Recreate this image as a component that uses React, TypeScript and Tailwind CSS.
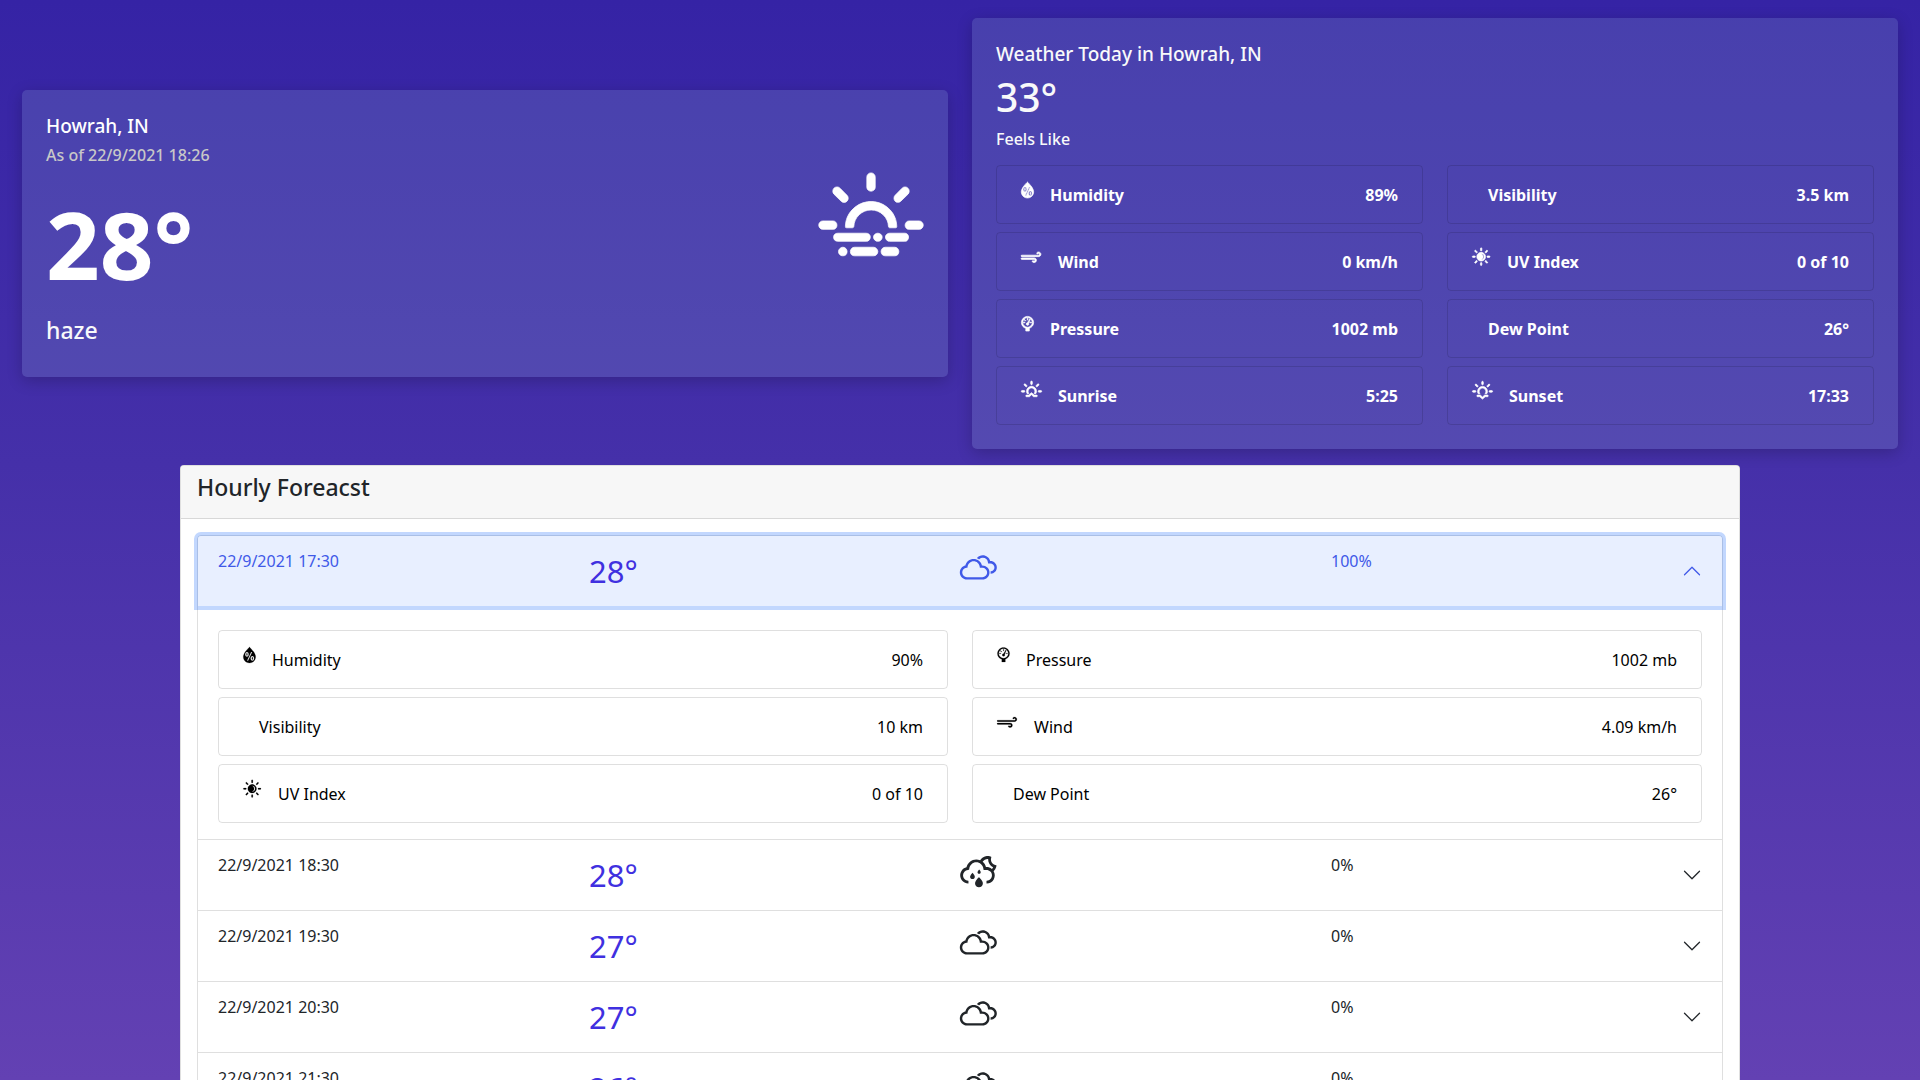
import { useState } from "react";
import type { IconType } from "react-icons";
import {
  WiBarometer,
  WiCloudy,
  WiDayHaze,
  WiHumidity,
  WiNightAltSprinkle,
  WiSolarEclipse,
  WiStrongWind,
  WiSunrise,
  WiSunset,
} from "react-icons/wi";

type Glyph = { icon: IconType; box: string; size: string };
type Reading = { label: string; value: string; glyph?: Glyph };
type Hour = { time: string; temp: string; icon: IconType; rain: string };

const humidity: Glyph = { icon: WiHumidity, box: "7.2 3 15.6 24", size: "w-[13px]" };
const wind: Glyph = { icon: WiStrongWind, box: "3 3 25.2 24", size: "w-[21px]" };
const pressure: Glyph = { icon: WiBarometer, box: "7.2 3 15.6 24", size: "w-[13px]" };
const sunrise: Glyph = { icon: WiSunrise, box: "2.4 3 25.2 24", size: "w-[21px]" };
const sunset: Glyph = { icon: WiSunset, box: "2.4 3 25.2 24", size: "w-[21px]" };
const uv: Glyph = { icon: WiSolarEclipse, box: "4 3 22.8 24", size: "w-[19px]" };

const today: Reading[] = [
  { label: "Humidity", value: "89%", glyph: humidity },
  { label: "Visibility", value: "3.5 km" },
  { label: "Wind", value: "0 km/h", glyph: wind },
  { label: "UV Index", value: "0 of 10", glyph: uv },
  { label: "Pressure", value: "1002 mb", glyph: pressure },
  { label: "Dew Point", value: "26°" },
  { label: "Sunrise", value: "5:25", glyph: sunrise },
  { label: "Sunset", value: "17:33", glyph: sunset },
];

const details: Reading[] = [
  { label: "Humidity", value: "90%", glyph: humidity },
  { label: "Pressure", value: "1002 mb", glyph: pressure },
  { label: "Visibility", value: "10 km" },
  { label: "Wind", value: "4.09 km/h", glyph: wind },
  { label: "UV Index", value: "0 of 10", glyph: uv },
  { label: "Dew Point", value: "26°" },
];

const hours: Hour[] = [
  { time: "22/9/2021 17:30", temp: "28°", icon: WiCloudy, rain: "100%" },
  { time: "22/9/2021 18:30", temp: "28°", icon: WiNightAltSprinkle, rain: "0%" },
  { time: "22/9/2021 19:30", temp: "27°", icon: WiCloudy, rain: "0%" },
  { time: "22/9/2021 20:30", temp: "27°", icon: WiCloudy, rain: "0%" },
  { time: "22/9/2021 21:30", temp: "26°", icon: WiCloudy, rain: "0%" },
];

function ReadingIcon({ glyph, bold }: { glyph: Glyph; bold?: boolean }) {
  const Icon = glyph.icon;
  return (
    <Icon
      aria-hidden
      viewBox={glyph.box}
      strokeWidth={bold ? 0.8 : 0.2}
      className={`h-5 shrink-0 overflow-visible ${glyph.size}`}
    />
  );
}

function ReadingBox({ reading, bold }: { reading: Reading; bold?: boolean }) {
  return (
    <div className="flex items-start rounded border border-black/[.125] px-6 py-3.5 leading-[27px]">
      {reading.glyph && <ReadingIcon glyph={reading.glyph} bold={bold} />}
      <dt className="ml-4 pt-0.5">{reading.label}</dt>
      <dd className="ml-auto pt-0.5">{reading.value}</dd>
    </div>
  );
}

function HourRow({ hour, open, onToggle }: { hour: Hour; open: boolean; onToggle: () => void }) {
  const Icon = hour.icon;
  return (
    <section className="border-b border-black/[.125] last:border-b-0">
      <h3>
        <button
          type="button"
          aria-expanded={open}
          onClick={onToggle}
          className={
            open
              ? "relative flex w-full items-center gap-1 rounded-t-[3px] bg-[#e8efff] px-5 py-4 text-left text-[#4059e8] shadow-[0_0_0_4px_rgba(13,95,253,0.25)] outline-none"
              : "flex w-full items-center gap-1 px-5 py-4 text-left outline-none"
          }
        >
          <span className="grid flex-1 grid-cols-4 items-start gap-6">
            <span className="leading-[18px]">{hour.time}</span>
            <span className="text-[31px] leading-[38px] text-[#4030e0]">{hour.temp}</span>
            <Icon aria-hidden viewBox="4 5.3 22.8 22.8" className="size-[38px] overflow-visible" />
            <span className="leading-[18px]">{hour.rain}</span>
          </span>
          <svg
            aria-hidden
            viewBox="0 0 16 16"
            fill="none"
            stroke="currentColor"
            strokeLinecap="round"
            strokeLinejoin="round"
            className={open ? "size-5 rotate-180" : "size-5"}
          >
            <path d="M2 5l6 6 6-6" />
          </svg>
        </button>
      </h3>
      {open && (
        <dl className="grid grid-cols-2 gap-x-6 gap-y-2 px-5 pt-6 pb-4 text-black">
          {details.map((r) => (
            <ReadingBox key={r.label} reading={r} />
          ))}
        </dl>
      )}
    </section>
  );
}

const glass =
  "rounded-[5px] bg-[rgba(160,200,215,0.175)] p-6 text-white shadow-[0_4px_16px_0_rgba(0,0,0,0.2)]";

export default function App() {
  const [openIndex, setOpenIndex] = useState(0);
  return (
    <div className="min-h-screen bg-[linear-gradient(180deg,#3523a5_0%,#4530a9_43%,#6341b3_100%)] bg-fixed pt-[18px] font-['Noto_Sans',sans-serif] text-base text-[#212529]">
      <main>
        <div className="grid grid-cols-2 items-center gap-6 px-[22px]">
          <section className={glass}>
            <div className="flex items-start justify-between pb-[9px]">
              <div>
                <h1 className="text-[19px] leading-6 font-medium">Howrah, IN</h1>
                <p className="mt-1 leading-[26px] font-medium text-[#c8c8c8]">
                  As of 22/9/2021 18:26
                </p>
                <p className="mt-7 text-[94px] leading-[96px] font-bold">28°</p>
                <p className="mt-6 text-[23px] leading-7 font-medium text-[#f8f9fa]">haze</p>
              </div>
              <WiDayHaze
                aria-hidden
                viewBox="4.22 4.85 21.54 17.2"
                strokeWidth={0.15}
                className="mt-[58px] h-[85px] w-[106px]"
              />
            </div>
          </section>
          <section className={glass}>
            <h2 className="text-[19px] leading-6 font-medium text-[#f8f9fa]">
              Weather Today in Howrah, IN
            </h2>
            <p className="mt-2.5 text-[39px] leading-[42px] font-medium text-[#f8f9fa]">33°</p>
            <p className="mt-2 leading-[27px] font-medium text-[#f8f9fa]">Feels Like</p>
            <dl className="mt-3 grid grid-cols-2 gap-x-6 gap-y-2 font-bold">
              {today.map((r) => (
                <ReadingBox key={r.label} reading={r} bold />
              ))}
            </dl>
          </section>
        </div>
        <section className="mx-auto mt-4 w-[81.25%] rounded border border-black/[.125] bg-white">
          <header className="rounded-t-[3px] border-b border-black/[.125] bg-[#f7f7f7] px-4 pt-2 pb-[18px]">
            <h2 className="text-[23px] leading-[26px] font-medium">Hourly Foreacst</h2>
          </header>
          <div className="p-4">
            <div className="rounded border border-black/[.125]">
              {hours.map((h, i) => (
                <HourRow
                  key={h.time}
                  hour={h}
                  open={i === openIndex}
                  onToggle={() => setOpenIndex(i === openIndex ? -1 : i)}
                />
              ))}
            </div>
          </div>
        </section>
      </main>
    </div>
  );
}
